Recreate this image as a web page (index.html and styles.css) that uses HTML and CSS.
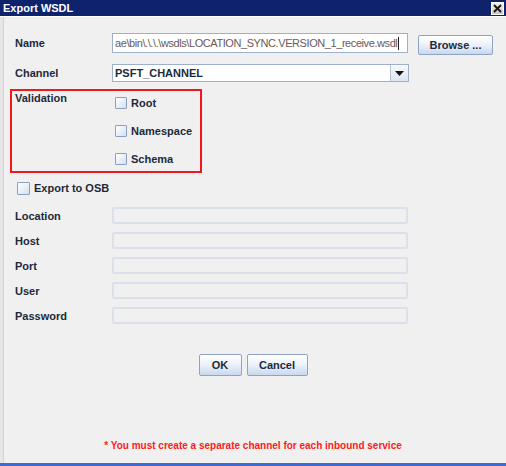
FILE: index.html
```html
<!DOCTYPE html>
<html>
<head>
<meta charset="utf-8">
<title>Export WSDL</title>
<link rel="stylesheet" href="styles.css">
</head>
<body>
<div class="window">
  <div class="titlebar">
    <span class="title">Export WSDL</span>
    <span class="close"><svg width="11" height="11" viewBox="0 0 11 11"><path d="M2 2 L9 9 M9 2 L2 9" stroke="#1a1a1a" stroke-width="2"/></svg></span>
  </div>
  <div class="content">
    <div class="row name-row">
      <span class="label">Name</span>
      <div class="textfield"><span class="value">ae\bin\.\.\.\wsdls\LOCATION_SYNC.VERSION_1_receive.wsdl</span><span class="caret"></span></div>
      <button class="btn browse">Browse ...</button>
    </div>
    <div class="row channel-row">
      <span class="label">Channel</span>
      <div class="combo">
        <span class="combo-value">PSFT_CHANNEL</span>
        <span class="combo-arrow"><svg width="9" height="5" viewBox="0 0 9 5"><path d="M0 0 H9 L4.5 5 Z" fill="#111"/></svg></span>
      </div>
    </div>
    <div class="validation">
      <span class="vlabel">Validation</span>
      <div class="checks">
        <label class="check"><span class="box"></span>Root</label>
        <label class="check"><span class="box"></span>Namespace</label>
        <label class="check"><span class="box"></span>Schema</label>
      </div>
    </div>
    <label class="check osb"><span class="box"></span>Export to OSB</label>
    <div class="fields">
      <div class="row field-row"><span class="label">Location</span><div class="disabled-field"></div></div>
      <div class="row field-row"><span class="label">Host</span><div class="disabled-field"></div></div>
      <div class="row field-row"><span class="label">Port</span><div class="disabled-field"></div></div>
      <div class="row field-row"><span class="label">User</span><div class="disabled-field"></div></div>
      <div class="row field-row"><span class="label">Password</span><div class="disabled-field"></div></div>
    </div>
    <div class="buttons">
      <button class="btn ok">OK</button>
      <button class="btn cancel">Cancel</button>
    </div>
    <div class="note">* You must create a separate channel for each inbound service</div>
  </div>
</div>
</body>
</html>
```

FILE: styles.css
```css
html, body {
  margin: 0;
  padding: 0;
  background: #f0f0f0;
}
.window {
  width: 506px;
  height: 466px;
  box-sizing: border-box;
  background: #f0f0f0;
  border-bottom: 3px solid #3c6ad6;
  font-family: "Liberation Sans", Arial, sans-serif;
  font-size: 11px;
  font-weight: bold;
  color: #1d2a3a;
  display: flex;
  flex-direction: column;
}
.titlebar {
  height: 16px;
  background: #0e236c;
  border-bottom: 1px solid #ffffff;
  display: flex;
  align-items: center;
  justify-content: space-between;
  padding: 0 2px 0 3px;
  color: #ffffff;
}
.title {
  font-size: 11px;
  font-weight: bold;
}
.close {
  width: 13px;
  height: 13px;
  background: linear-gradient(#f4f4ee, #c8c8c0);
  border: 1px solid #ffffff;
  box-sizing: border-box;
  display: flex;
  align-items: center;
  justify-content: center;
}
.content {
  flex: 1;
  display: flex;
  flex-direction: column;
  border-left: 3px solid #e6e6e6;
  padding-left: 12px;
  box-shadow: inset 1px 0 0 #d2d2d2;
}
.row {
  display: flex;
  align-items: center;
}
.label {
  width: 97px;
  flex: none;
  line-height: 14px;
}
.name-row {
  margin-top: 16px;
  align-items: flex-start;
  height: 22px;
}
.name-row .label {
  line-height: 20px;
}
.textfield {
  width: 296px;
  height: 20px;
  box-sizing: border-box;
  border: 1px solid #9eb0cc;
  background: #ffffff;
  display: flex;
  align-items: center;
  padding-left: 2px;
  overflow: hidden;
  white-space: nowrap;
}
.value {
  font-weight: normal;
  color: #6a5a5a;
  font-size: 11px;
  letter-spacing: -0.42px;
}
.caret {
  width: 1px;
  height: 13px;
  background: #222;
  margin-left: 1px;
  flex: none;
}
.btn {
  font-family: "Liberation Sans", Arial, sans-serif;
  font-size: 11px;
  font-weight: bold;
  color: #1d2a3a;
  background: linear-gradient(#ffffff 0%, #eef3fa 45%, #c9d8ee 100%);
  border: 1px solid #8fa4c4;
  border-radius: 2px;
  padding: 0;
  box-sizing: border-box;
}
.browse {
  width: 75px;
  height: 20px;
  margin-top: 2px;
  margin-left: 10px;
}
.channel-row {
  margin-top: 9px;
  height: 18px;
}
.combo {
  width: 297px;
  height: 18px;
  box-sizing: border-box;
  border: 1px solid #9eb0cc;
  background: #ffffff;
  display: flex;
  align-items: center;
}
.combo-value {
  flex: 1;
  padding-left: 2px;
}
.combo-arrow {
  width: 17px;
  height: 16px;
  border-left: 1px solid #b4c2d8;
  background: linear-gradient(#f8fafd, #dce4f0);
  display: flex;
  align-items: center;
  justify-content: center;
}
.validation {
  margin-top: 7px;
  margin-left: -5px;
  width: 192px;
  height: 84px;
  box-sizing: border-box;
  border: 2px solid #f0181c;
  padding-left: 3px;
  display: flex;
  align-items: flex-start;
}
.vlabel {
  width: 100px;
  flex: none;
  line-height: 14px;
}
.checks {
  margin-top: 5px;
  display: flex;
  flex-direction: column;
  gap: 14px;
}
.check {
  display: flex;
  align-items: center;
  line-height: 14px;
  height: 14px;
}
.box {
  width: 10px;
  height: 10px;
  border: 1px solid #8aa0bf;
  border-radius: 1px;
  background: linear-gradient(135deg, #ffffff, #d6e0ee);
  margin-right: 4px;
  flex: none;
}
.osb {
  margin-top: 8px;
  margin-left: 2px;
}
.osb .box {
  width: 11px;
  height: 11px;
}
.fields {
  margin-top: 12px;
  display: flex;
  flex-direction: column;
  gap: 8px;
}
.field-row {
  height: 17px;
}
.disabled-field {
  width: 296px;
  height: 17px;
  box-sizing: border-box;
  border: 2px solid #dce0ea;
  border-radius: 2px;
  background: #f0f0f0;
}
.buttons {
  margin-top: 30px;
  margin-left: -15px;
  display: flex;
  justify-content: center;
  gap: 5px;
}
.ok {
  width: 43px;
  height: 22px;
}
.cancel {
  width: 61px;
  height: 22px;
}
.note {
  margin-top: 63px;
  margin-left: -15px;
  text-align: center;
  color: #ff1a1a;
  font-size: 10px;
  line-height: 14px;
}
```
